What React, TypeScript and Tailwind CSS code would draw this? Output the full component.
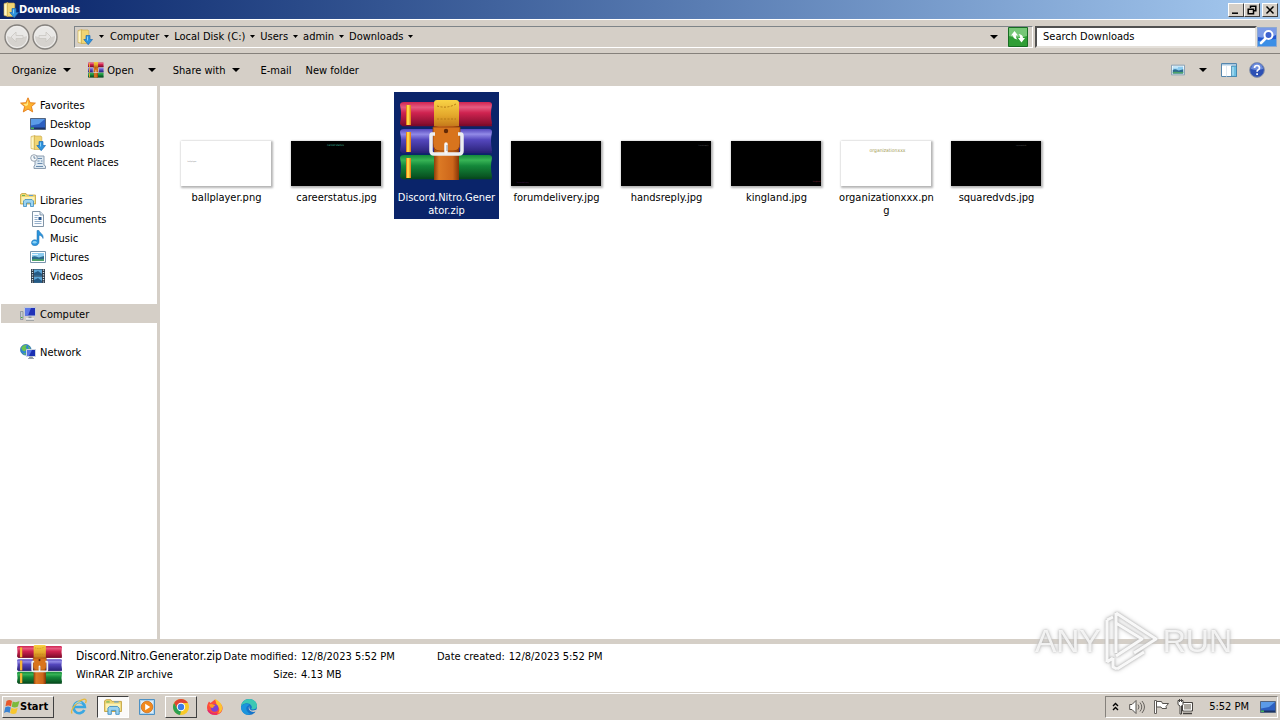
import React, { useId } from "react";

type IconProps = { className?: string };

const raised =
  "border border-t-white border-l-white border-r-[#404040] border-b-[#404040] bg-[#d5cfc7]";

function FolderDown({ className = "size-4" }: IconProps) {
  return (
    <svg viewBox="0 0 16 16" className={className} aria-hidden="true">
      <path d="M1 1.500 5 .5v14L1 13.500z" fill="#f8e9a0" stroke="#c9a545" strokeWidth=".6" />
      <path d="M4.500 1H11l.8 1v12.500H4.500z" fill="#f1d573" stroke="#c8a648" strokeWidth=".6" />
      <path d="M2.200 2.500v10.600" stroke="#fffbe0" />
      <path d="M9 6.500h4v4h2.500L11.200 15.700 6.800 10.500H9z" fill="#2f93dd" stroke="#1c6cb4" strokeWidth=".7" />
      <path d="M10.500 7.500v4" stroke="#8ad2f8" />
    </svg>
  );
}

function Star() {
  return (
    <svg viewBox="0 0 16 16" className="size-4" aria-hidden="true">
      <path d="m8 .8 2.100 4.900 5.300.4-4 3.500 1.300 5.300L8 12.100l-4.700 2.800 1.300-5.300-4-3.500 5.300-.4z" fill="#fdb22f" stroke="#e37a17" strokeWidth=".9" />
      <path d="M8 3 6.700 6.700l-3.500.4 2.700 2.200L8 8z" fill="#ffe680" />
    </svg>
  );
}

function Monitor() {
  return (
    <svg viewBox="0 0 16 16" className="size-4" aria-hidden="true">
      <path d="M.5 2.500h15v11H.5z" fill="#2c5fc0" stroke="#53657f" />
      <path d="M1 3h14L9 8 1 9.500z" fill="#5b9be8" />
      <path d="M1 11.500h14V13H1z" fill="#1c3264" />
      <path d="M1 11.500h3V13H1z" fill="#45b35c" />
    </svg>
  );
}

function Recent() {
  return (
    <svg viewBox="0 0 16 16" className="size-4" aria-hidden="true">
      <path d="M5 2h9v9l1.500 1v2.500H4V12l1-1z" fill="#dde8f1" stroke="#8194a8" strokeWidth=".9" />
      <path d="M7.500 4.500h4.500M7.500 7h2M11 7h1.500M7.500 9.500h5M6 12.500h7" stroke="#6b8cae" />
      <circle cx="4" cy="4" r="3.300" fill="#f7fafc" stroke="#8d9aa8" strokeWidth=".9" />
      <path d="M4 2v2.200h1.600" fill="none" stroke="#4f6c8a" strokeWidth=".8" />
    </svg>
  );
}

function Library({ className = "size-4" }: IconProps) {
  return (
    <svg viewBox="0 0 16 16" className={className} aria-hidden="true">
      <path d="M.5 2.500 2 1.500h4l1 1.500h8.500v9H.5z" fill="#efd672" stroke="#c3a23f" strokeWidth=".8" />
      <path d="M1.500 5h13v6h-13z" fill="#fbf1b4" />
      <path d="M2 3.500h3" stroke="#66b456" />
      <path d="M9 3.500h4" stroke="#5e9ed4" />
      <path d="M3.500 14.500V9L5 7.500h7L13.500 9v5.500h-3V11h-4v3.500z" fill="#9bd3f0" stroke="#3c8cc0" strokeWidth=".8" />
    </svg>
  );
}

function DocumentIcon() {
  return (
    <svg viewBox="0 0 16 16" className="size-4" aria-hidden="true">
      <path d="M2.500.5H10L13.500 4v11.500h-11z" fill="#fbfdff" stroke="#74899d" strokeWidth=".9" />
      <path d="M10 .5V4h3.500" fill="#d5e2ee" stroke="#74899d" strokeWidth=".8" />
      <path d="M4.500 4.500h4M4.500 6.500h3M4.500 8.500h3M4.500 10.500h7M4.500 12.500h7" stroke="#7b9bbd" strokeWidth=".8" />
      <path d="M8.500 6h3v3h-3z" fill="#27558c" />
    </svg>
  );
}

function MusicIcon() {
  return (
    <svg viewBox="0 0 16 16" className="size-4" aria-hidden="true">
      <path d="M7 .5h2c.5 2.500 5 3.500 4 8-.5-2-2-3-4-3.300V12c0 4.500-7.500 4.800-7.500 1C1.500 10 4.500 9 7 10.300z" fill="#2c95dc" stroke="#1c6cae" strokeWidth=".5" />
      <ellipse cx="4.600" cy="12.300" rx="2" ry="1.200" fill="#8cd2f5" />
    </svg>
  );
}

function PictureIcon({ className = "size-4" }: IconProps) {
  return (
    <svg viewBox="0 0 16 16" className={className} aria-hidden="true">
      <path d="M.5 2.500h15v11H.5z" fill="#fff" stroke="#7895ad" />
      <path d="M2 4h12v8H2z" fill="#8dccf0" />
      <path d="M2 8c3-2 5 0 7 .5L14 7v5H2z" fill="#2c6b8d" />
      <path d="M2 10.500c5-1.500 8 .5 12-.5v2H2z" fill="#4fa36a" />
      <path d="M2 5.500h6" stroke="#e7f6fe" />
    </svg>
  );
}

function VideoIcon() {
  return (
    <svg viewBox="0 0 16 16" className="size-4" aria-hidden="true">
      <path d="M1 1h14v14H1z" fill="#2c3947" />
      <path d="M4 1.500h8v6H4zM4 8.500h8v6H4z" fill="#5ba4d6" />
      <path d="m4 5 4-2 4 3v1.500H4zM4 12l4-2 4 3v1.500H4z" fill="#245a86" />
      <path d="M2.500 1.500v13M13.500 1.500v13" stroke="#d8e4ee" strokeWidth="1.300" strokeDasharray="1.200 1.200" />
    </svg>
  );
}

function ComputerIcon() {
  return (
    <svg viewBox="0 0 16 16" className="size-4" aria-hidden="true">
      <path d="M.5 5.500h2.500v8H.5z" fill="#c5cbd0" stroke="#7b8590" strokeWidth=".7" />
      <path d="M1 11.500h1.500" stroke="#45ad45" />
      <path d="M4.500 1.500h11v8.500h-11z" fill="#2032b8" stroke="#c3ccdc" />
      <path d="M5 2h6L8 9.500H5z" fill="#5c78e8" />
      <path d="M8.500 10.500h3v2h-3z" fill="#8a949e" />
      <path d="M6 13h8" stroke="#eef1f4" strokeWidth="1.600" />
      <path d="M6 14.300h8" stroke="#7a858e" strokeWidth=".7" />
    </svg>
  );
}

function NetworkIcon() {
  return (
    <svg viewBox="0 0 16 16" className="size-4" aria-hidden="true">
      <circle cx="5.800" cy="5.800" r="5.300" fill="#2f86d1" stroke="#2467a4" strokeWidth=".7" />
      <path d="M1.200 4C3 1 5 .8 7 1L5.500 3.500 7 5 4.500 7.500l-2-1zM3 9l3 .5-1 1.500zM8 2l2.500 2L9 5.500z" fill="#6cc34e" />
      <path d="M6.500 5.500h9v7h-9z" fill="#1a2fb3" stroke="#cdd6e2" />
      <path d="M7 6h5l-3 6H7z" fill="#5672e4" />
      <path d="M9.500 13h3v1h-3zM8 14.500h6" fill="#8e98a5" stroke="#8e98a5" strokeWidth=".9" />
    </svg>
  );
}

function WinRar({ className }: IconProps) {
  const id = useId().replace(/:/g, "");
  const books = [
    { y: 1, name: "r", hi: "#e65a80", mid: "#cf2350", lo: "#7c0b2a" },
    { y: 28, name: "b", hi: "#9189e6", mid: "#5447bd", lo: "#292177" },
    { y: 54, name: "g", hi: "#37b355", mid: "#14883a", lo: "#07491d" },
  ];
  return (
    <svg viewBox="0 0 94 82" preserveAspectRatio="none" className={className} aria-hidden="true">
      <defs>
        {books.map((b) => (
          <linearGradient key={b.name} id={id + b.name} x1="0" y1="0" x2="0" y2="1">
            <stop offset="0" stopColor={b.mid} />
            <stop offset=".22" stopColor={b.hi} />
            <stop offset=".45" stopColor={b.mid} />
            <stop offset="1" stopColor={b.lo} />
          </linearGradient>
        ))}
        <linearGradient id={id + "s"} x1="0" y1="0" x2="1" y2="0">
          <stop offset="0" stopColor="#8e3f0b" />
          <stop offset=".2" stopColor="#dc7a25" />
          <stop offset=".75" stopColor="#cd661a" />
          <stop offset="1" stopColor="#843507" />
        </linearGradient>
        <linearGradient id={id + "t"} x1="0" y1="0" x2="0" y2="1">
          <stop offset="0" stopColor="#f9d346" />
          <stop offset=".6" stopColor="#e3a72b" />
          <stop offset="1" stopColor="#c67a1b" />
        </linearGradient>
      </defs>
      {books.map((b) => (
        <g key={b.name}>
          <path d={`M4 ${b.y + 1}h85q3 0 3 3-2 9 0 18 0 3-3 3H4q-4 0-4-3 2-9 0-18 0-3 4-3z`} fill={`url(#${id + b.name})`} />
          <path d={`M2 ${b.y + 24.500}h90`} stroke={b.lo} strokeWidth="1.500" />
          <path d={`M6 ${b.y + 4}h5v20H6z`} fill="#e8851f" />
          <path d={`M7 ${b.y + 4}h2.500v20H7z`} fill="#ffd644" />
          <path d={`M60 ${b.y + 6}h30`} stroke={b.hi} strokeWidth="1" opacity=".6" />
        </g>
      ))}
      <path d="M34 24h25v56H34z" fill={`url(#${id}s)`} />
      <path d="M34 3q0-3 3-3h19q3 0 3 3v23H34z" fill={`url(#${id}t)`} />
      <path d="M37 6q10 3 19-2M37 19h19" fill="none" stroke="#b57a14" strokeWidth="1" strokeDasharray="2 1.500" />
      <path d="M33 27h27v16q0 8-7 8H40q-7 0-7-8z" fill="#d8741d" stroke="#8d400b" strokeWidth=".8" />
      <circle cx="46" cy="31" r="2.200" fill="#632907" />
      <path d="M35 34h-3q-1 0-1 2v15q0 3 3 3h25q3 0 3-3V36q0-2-1-2h-3" fill="none" stroke="#eceef0" strokeWidth="3.500" />
      <path d="M46 44v8" stroke="#f7f7f8" strokeWidth="3.500" strokeLinecap="round" />
      <path d="M47 45v6" stroke="#8c939d" strokeWidth="1" />
    </svg>
  );
}

function Caret({ small = false }: { small?: boolean }) {
  return (
    <svg viewBox="0 0 8 4" preserveAspectRatio="none" className={small ? "h-[3px] w-[5px]" : "h-1 w-2"} aria-hidden="true">
      <path d="M0 0h8L4 4z" fill="#000" />
    </svg>
  );
}

function NavCircle({ back }: { back: boolean }) {
  return (
    <button aria-label={back ? "Back" : "Forward"} className="size-[26px]">
      <svg viewBox="0 0 26 26" className="size-[26px]" aria-hidden="true">
        <circle cx="13" cy="13" r="12" fill="#d5d2ce" stroke="#85827e" strokeWidth="1.300" />
        <path d="M3 12a10 10 0 0 1 20 0q-10 4-20 0z" fill="#e9e8e6" />
        <circle cx="13" cy="13" r="10.500" fill="none" stroke="#f1f0ef" />
        <path
          d={back ? "M7 13l5-5v3.500h7v3h-7V18z" : "M19 13l-5-5v3.500H7v3h7V18z"}
          fill="#e6e4e2"
          stroke="#c9c6c2"
          strokeWidth=".8"
        />
      </svg>
    </button>
  );
}

function RefreshIcon() {
  return (
    <svg viewBox="0 0 20 20" className="size-5" aria-hidden="true">
      <path d="M.5.5h19v19H.5z" fill="#2f9e35" stroke="#176c22" />
      <path d="M1 1h18v8q-9 3-18 0z" fill="#76c777" />
      <path d="M3 8.500 6.500 4 10 8.500H7.800q0 2.500 1.700 4-4.500-.5-4.500-4z" fill="#fff" />
      <path d="M17 11l-3.500 4.500L10 11h2.200q0-2.500-1.700-4 4.500.5 4.500 4z" fill="#fff" />
    </svg>
  );
}

function SearchIcon() {
  return (
    <svg viewBox="0 0 20 20" className="size-5" aria-hidden="true">
      <path d="M.5.5h19v19H.5z" fill="#2457cf" stroke="#8da9d2" />
      <path d="M1 1h18v7q-9 4-18 2z" fill="#7b9ae6" />
      <path d="M1 14q9-1 18-2v7H1z" fill="#3c8fe6" />
      <path d="m8.500 11.500-4.500 4.500" stroke="#fff" strokeWidth="2.600" strokeLinecap="round" />
      <circle cx="11.500" cy="8" r="4" fill="#3d62cf" stroke="#fff" strokeWidth="2" />
    </svg>
  );
}

function HelpIcon() {
  return (
    <svg viewBox="0 0 16 16" className="size-4" aria-hidden="true">
      <circle cx="8" cy="8" r="7.400" fill="#2c50b4" stroke="#8a95ab" />
      <path d="M2 7a6 6 0 0 1 12 0q-6 2-12 0z" fill="#6d8cdc" />
      <path d="M5.500 6q0-2.500 2.500-2.500T10.500 6q0 1.300-1.500 2-.9.500-.9 1.700M8.100 11.300v1.600" fill="none" stroke="#fff" strokeWidth="1.700" />
    </svg>
  );
}

function PaneIcon() {
  return (
    <svg viewBox="0 0 16 14" className="h-3.5 w-4" aria-hidden="true">
      <path d="M.5.5h15v13H.5z" fill="#fff" stroke="#5586ad" />
      <path d="M1 1h14v1.500H1z" fill="#a8c9e2" />
      <path d="M5.500 2.500v11" stroke="#dfe9f1" />
      <path d="M10.500 3v10.500h5V3z" fill="#6cbfe2" stroke="#3b80a8" strokeWidth=".7" />
      <path d="M12 4v8.500" stroke="#c4ebfa" />
    </svg>
  );
}

function NavRow({ icon, label, child = false, active = false }: {
  icon: React.ReactNode; label: string; child?: boolean; active?: boolean;
}) {
  return (
    <a
      href={"#" + label.replace(" ", "-")}
      className={
        "ml-px flex h-[19px] items-center gap-1 " +
        (child ? "pl-[29px] " : "pl-[19px] ") +
        (active ? "bg-[#d5cfc7]" : "")
      }
    >
      {icon}
      <span className="pt-0.5">{label}</span>
    </a>
  );
}

function Thumb({ dark, mark, text }: { dark: boolean; mark: string; text: string }) {
  return (
    <div
      className={
        "mr-0.5 flex h-[45px] w-[90px] overflow-hidden leading-[5px] shadow-[1px_1px_2px_1px_#b5b5b5] " +
        (dark ? "bg-black " : "bg-white ") + mark
      }
    >
      {text}
    </div>
  );
}

const files = [
  { name: "ballplayer.png", dark: false, text: "ballplayer", mark: "items-center pl-[7px] pb-1 text-[2px] text-[#8a8a8a]" },
  { name: "careerstatus.jpg", dark: true, text: "careerstatus", mark: "justify-center items-start pt-0.5 text-[3px] text-[#35a088]" },
  { name: "Discord.Nitro.Generator.zip", archive: true },
  { name: "forumdelivery.jpg", dark: true, text: "forumdelivery", mark: "items-end pl-1.5 pb-px text-[2px] text-[#421a4c]" },
  { name: "handsreply.jpg", dark: true, text: "handsreply", mark: "justify-end items-start pr-0.5 pt-0.5 text-[2px] text-[#555]" },
  { name: "kingland.jpg", dark: true, text: "kingland", mark: "justify-end items-end pb-0.5 text-[2px] text-[#852b3c]" },
  { name: "organizationxxx.png", dark: false, text: "organizationxxx", mark: "justify-center items-start pl-1 pt-[7px] text-[5px] text-[#a39b56]" },
  { name: "squaredvds.jpg", dark: true, text: "squaredvds", mark: "justify-end items-start pr-3.5 pt-0.5 text-[2px] text-[#555]" },
];

function Crumb({ label }: { label: string }) {
  return (
    <span className="flex items-center gap-[5px]">
      <a href={"#" + label.replace(/\W/g, "")}>{label}</a>
      <Caret small />
    </span>
  );
}

function WindowButton({ label, path }: { label: string; path: string }) {
  return (
    <button aria-label={label} className={"flex h-3.5 w-4 items-center justify-center " + raised}>
      <svg viewBox="0 0 10 10" className="size-2.5" aria-hidden="true">
        <path d={path} fill="none" stroke="#000" strokeWidth="1.500" />
      </svg>
    </button>
  );
}

function StartFlag() {
  return (
    <svg viewBox="0 0 16 16" className="size-4" aria-hidden="true">
      <path d="M2.500 2q3-2 5.500 0L7 7.500q-2.500-2-5.500-.2z" fill="#e8582a" />
      <path d="M8.700 2.400q3 1.700 6.800-.4l-1.600 5.500q-3 1.800-6.200.2z" fill="#7cba3c" />
      <path d="M1.300 8.300q3-1.600 5.500.2l-1.200 5.500q-2.500-1.800-5.600-.1z" fill="#3a83d2" />
      <path d="M7.500 8.800q3 1.700 6.200 0l-1.500 5.500q-3 1.600-6.100-.2z" fill="#f8c62c" />
    </svg>
  );
}

function IeIcon() {
  return (
    <svg viewBox="0 0 18 18" className="size-[18px]" aria-hidden="true">
      <path d="M14.300 12A5.600 5.600 0 1 1 14.800 9H4.500" fill="none" stroke="#39a7e2" strokeWidth="2.700" />
      <path d="M2.200 15.500C-.5 13 6 4 12 1.800c4-1.500 5 .2 3.500 3.200" fill="none" stroke="#e6b93a" strokeWidth="1.300" />
      <path d="M4.800 6.500q3-4 7-1.500" fill="none" stroke="#a0dcf7" strokeWidth=".9" />
    </svg>
  );
}

function MediaIcon() {
  return (
    <svg viewBox="0 0 18 18" className="size-[18px]" aria-hidden="true">
      <path d="M1.500 1.500h15v15h-15z" fill="#aed4ef" stroke="#4d91c4" />
      <path d="M3 3h12v12H3z" fill="#dcedf8" />
      <circle cx="9" cy="9" r="5.800" fill="#f18a1e" stroke="#c96410" strokeWidth=".7" />
      <path d="m7.200 5.800 5 3.200-5 3.200z" fill="#fff" />
    </svg>
  );
}

function ChromeIcon() {
  return (
    <svg viewBox="0 0 18 18" className="size-[18px]" aria-hidden="true">
      <circle cx="9" cy="9" r="8" fill="#f8c927" />
      <path d="M2.100 5A8 8 0 0 1 15.900 5H9L5.500 11z" fill="#df4434" />
      <path d="M2.100 5 5.500 11 9 13l-1 4A8 8 0 0 1 2.100 5z" fill="#2ba052" />
      <circle cx="9" cy="9" r="4.200" fill="#fff" />
      <circle cx="9" cy="9" r="3.200" fill="#3a7de8" />
    </svg>
  );
}

function FirefoxIcon() {
  return (
    <svg viewBox="0 0 18 18" className="size-[18px]" aria-hidden="true">
      <path d="M9 1.500c1 1 2 1.300 2.500 3.500C15 5 17 8 16.500 11 16 14.500 13 17 9 17c-4.500 0-8-3.300-8-7.500C1 7 2 5 3 3.500L4.500 5z" fill="#fd4b3c" />
      <path d="M9 1c3 1.500 7 4 7.300 8.500.2 3-2 5.500-4.800 6.200 3-2.700 2-6.200-.5-7.700z" fill="#ffc32f" />
      <circle cx="8.700" cy="10" r="3.700" fill="#7d42d5" />
      <path d="M3 6.500Q6 5 9.500 7.500 7 8 7 10q-3 0-4-3.500z" fill="#ff9a24" />
      <path d="M2 12q3 5 9 3.700" fill="none" stroke="#e32b70" strokeWidth="1.500" />
    </svg>
  );
}

function EdgeIcon() {
  return (
    <svg viewBox="0 0 18 18" className="size-[18px]" aria-hidden="true">
      <circle cx="9" cy="9" r="8" fill="#1674c9" />
      <path d="M1 8.500C1.800 3.700 5 1 9.200 1c4.800 0 8 3.500 7.800 7 0 2.700-3.300 4.200-6 3q1.600-1.500.2-3.500C9 4.300 3.500 4.700 1 8.500z" fill="#3cc8b4" />
      <path d="M1 9C3.500 4.500 8.500 5.500 9.500 7c-4 .5-5 6 1 9-5 2.500-9.500-2-9.500-7z" fill="#1c95dc" />
      <path d="M9.500 8q-1 3 1.500 4.200 3 .8 6.200-1l-.8 2.300C9 15.500 7.500 10 9.500 8z" fill="#d5cfc7" />
    </svg>
  );
}

function TaskButton({ label, icon, state = "" }: { label: string; icon: React.ReactNode; state?: string }) {
  return (
    <button
      aria-label={label}
      className={
        "flex h-[22px] w-8 items-center justify-center " +
        (state === "active"
          ? "border border-t-[#404040] border-l-[#404040] border-r-white border-b-white bg-[#fbfaf9]"
          : state === "open"
            ? raised
            : "")
      }
    >
      {icon}
    </button>
  );
}

function Watermark() {
  return (
    <div className="pointer-events-none absolute right-[48px] bottom-[47px] flex items-center gap-0.5 font-['Liberation_Sans',sans-serif] text-[32px] leading-[64px] text-white/80 [filter:drop-shadow(0_0_1px_#aaa)_drop-shadow(0_0_2px_#ccc)]">
      <span>ANY</span>
      <svg viewBox="0 0 58 64" className="h-16 w-[58px]" aria-hidden="true">
        <path
          d="M13 4v40M13 4l40 26-22 14M13 14l26 16-26 17M4 11v42M4 11l6-3M4 53l6-4M14 60l27-17M10 49v9l4 2"
          fill="none"
          stroke="#fff"
          strokeOpacity=".9"
          strokeWidth="3"
          strokeLinejoin="round"
        />
      </svg>
      <span>RUN</span>
    </div>
  );
}

export default function App() {
  return (
    <div className="relative flex h-screen flex-col overflow-hidden bg-white font-['DejaVu_Sans_Condensed','DejaVu_Sans',sans-serif] text-[11px] leading-[13px] whitespace-nowrap text-black">
      <header className="flex h-[19px] shrink-0 items-center justify-between bg-linear-to-r from-[#0a246a] to-[#a6caf0] pr-0.5 pl-[3px]">
        <h1 className="flex items-center font-bold text-white">
          <FolderDown />
          Downloads
        </h1>
        <div className="flex">
          <WindowButton label="Minimize" path="M1 8.200h6" />
          <WindowButton label="Restore" path="M3.500 3V1.200h5.300v4.500H7M1.200 4.200h5.300v4.500H1.200z" />
          <span className="w-0.5" />
          <WindowButton label="Close" path="m1.500 1.500 7 7m0-7-7 7" />
        </div>
      </header>

      <div className="flex h-[35px] shrink-0 items-center border-t border-b border-t-white border-b-[#85817b] bg-[#d5cfc7] pr-[3px] pl-1 shadow-[0_1px_0_#fff]">
        <div className="flex gap-0.5">
          <NavCircle back />
          <NavCircle back={false} />
        </div>
        <nav aria-label="Address" className="ml-4 flex h-[22px] min-w-0 flex-1 items-center border border-t-[#7e8488] border-l-[#7e8488] border-r-white border-b-white">
          <FolderDown className="mr-1.5 ml-0.5 size-4" />
          <Caret small />
          <div className="ml-1.5 flex flex-1 gap-[5px]">
            {["Computer", "Local Disk (C:)", "Users", "admin", "Downloads"].map((c) => (
              <Crumb key={c} label={c} />
            ))}
          </div>
          <button aria-label="Previous locations" className="mr-2.5"><Caret /></button>
          <button aria-label="Refresh"><RefreshIcon /></button>
          <span className="w-1" />
        </nav>
        <input
          aria-label="Search Downloads"
          placeholder="Search Downloads"
          className="ml-0.5 h-[22px] w-[222px] rounded-none border-2 border-t-[#505050] border-l-[#505050] border-r-[#e4e0da] border-b-[#e4e0da] bg-white px-1.5 outline-none placeholder:text-black"
        />
        <button aria-label="Search"><SearchIcon /></button>
      </div>

      <div className="flex h-8 shrink-0 items-center bg-[#d5cfc7] pr-[15px] pl-3">
        <button className="flex items-center gap-[7px]">Organize <Caret /></button>
        <button className="ml-[17px] flex items-center gap-[3px]"><WinRar className="size-4" /> Open</button>
        <button aria-label="Open options" className="ml-3.5"><Caret /></button>
        <button className="ml-[17px] flex items-center gap-[7px]">Share with <Caret /></button>
        <button className="ml-5">E-mail</button>
        <button className="ml-3.5">New folder</button>
        <div className="ml-auto flex items-center">
          <button aria-label="Change view"><PictureIcon className="size-3.5" /></button>
          <button aria-label="View options" className="ml-3.5"><Caret /></button>
          <button aria-label="Preview pane" className="ml-3.5"><PaneIcon /></button>
          <button aria-label="Help" className="ml-3"><HelpIcon /></button>
        </div>
      </div>

      <div className="flex min-h-0 flex-1">
        <nav aria-label="Folders" className="w-40 shrink-0 overflow-hidden border-r-[3px] border-[#d5cfc7] pt-[9px]">
          <NavRow icon={<Star />} label="Favorites" />
          <NavRow child icon={<Monitor />} label="Desktop" />
          <NavRow child icon={<FolderDown />} label="Downloads" />
          <NavRow child icon={<Recent />} label="Recent Places" />
          <div className="h-[19px]" />
          <NavRow icon={<Library />} label="Libraries" />
          <NavRow child icon={<DocumentIcon />} label="Documents" />
          <NavRow child icon={<MusicIcon />} label="Music" />
          <NavRow child icon={<PictureIcon />} label="Pictures" />
          <NavRow child icon={<VideoIcon />} label="Videos" />
          <div className="h-[19px]" />
          <NavRow active icon={<ComputerIcon />} label="Computer" />
          <div className="h-[19px]" />
          <NavRow icon={<NetworkIcon />} label="Network" />
        </nav>
        <main className="flex flex-1 flex-wrap content-start gap-[5px] overflow-hidden pt-1.5 pl-3.5">
          {files.map((f) => (
            <figure
              key={f.name}
              className={
                "flex h-[127px] w-[105px] flex-col items-center " +
                (f.archive ? "bg-[#0a246a] text-white" : "")
              }
            >
              <div className="flex h-[99px] flex-col items-center justify-end pb-[5px]">
                {f.archive ? (
                  <WinRar className="mb-1 h-[82px] w-[94px]" />
                ) : (
                  <Thumb dark={!!f.dark} mark={f.mark ?? ""} text={f.text ?? ""} />
                )}
              </div>
              <figcaption className="w-[99px] text-center break-all whitespace-normal">{f.name}</figcaption>
            </figure>
          ))}
        </main>
      </div>

      <section aria-label="Details" className="flex h-[53px] shrink-0 items-start border-t-[5px] border-[#d5cfc7] pt-px pl-[17px]">
        <WinRar className="h-10 w-[46px]" />
        <div className="ml-[13px] flex w-[147px] flex-col gap-[5px] pt-[5px]">
          <span className="text-[12px]">Discord.Nitro.Generator.zip</span>
          <span>WinRAR ZIP archive</span>
        </div>
        <dl className="grid w-[210px] grid-cols-[74px_1fr] gap-x-1 gap-y-[5px] pt-[5px]">
          <dt className="text-right">Date modified:</dt>
          <dd>12/8/2023 5:52 PM</dd>
          <dt className="text-right">Size:</dt>
          <dd>4.13 MB</dd>
        </dl>
        <dl className="ml-1 flex gap-1 pt-[5px]">
          <dt>Date created:</dt>
          <dd>12/8/2023 5:52 PM</dd>
        </dl>
      </section>

      <footer className="flex h-7 shrink-0 items-center border-t border-[#d5cfc7] bg-[#d5cfc7] pr-0.5 pl-0.5 shadow-[inset_0_1px_0_#fff]">
        <button className={"flex h-[22px] w-[52px] items-center pl-px font-bold " + raised}>
          <StartFlag />
          Start
        </button>
        <div className="ml-[9px] flex gap-0.5">
          <TaskButton label="Internet Explorer" icon={<IeIcon />} />
          <TaskButton label="Windows Explorer" icon={<Library className="size-[18px]" />} state="active" />
          <TaskButton label="Media Player" icon={<MediaIcon />} />
          <TaskButton label="Chrome" icon={<ChromeIcon />} state="open" />
          <TaskButton label="Firefox" icon={<FirefoxIcon />} />
          <TaskButton label="Edge" icon={<EdgeIcon />} />
        </div>
        <div className="ml-auto flex h-[22px] items-center border border-t-[#85817b] border-l-[#85817b] border-r-white border-b-white pr-px pl-1.5">
          <button aria-label="Show hidden icons">
            <svg viewBox="0 0 7 9" className="h-[9px] w-[7px]" aria-hidden="true">
              <path d="m1 4 2.500-2.500L6 4M1 8l2.500-2.500L6 8" fill="none" stroke="#000" strokeWidth="1.400" />
            </svg>
          </button>
          <svg viewBox="0 0 16 16" className="ml-2.5 size-4" role="img" aria-label="Volume">
            <path d="M.7 5.500H3L7 1.500v13L3 10.500H.7z" fill="#fff" stroke="#55524e" />
            <path d="M9 5.500q2 2.500 0 5M11 3.500q3.500 4.500 0 9M13 2q5 6 0 12" fill="none" stroke="#66625e" />
          </svg>
          <svg viewBox="0 0 16 16" className="ml-2 size-4" role="img" aria-label="Action Center">
            <path d="M1.500 1.500h2v13h-2z" fill="#fff" stroke="#66625e" />
            <path d="M3.500 2.500h5l1 2h6l-2.500 3 .5 2H9l-1-1.500H3.500z" fill="#fff" stroke="#55524e" />
          </svg>
          <svg viewBox="0 0 16 16" className="ml-2 size-4" role="img" aria-label="Network status">
            <path d="M5.500 3.500h10v8.500h-10z" fill="#aaa69f" stroke="#45423f" />
            <path d="M6.500 4.500h8v6.500h-8z" fill="none" stroke="#fff" />
            <path d="M6 14.500h9" stroke="#45423f" strokeWidth="1.500" />
            <path d="M1 1.500h5v4L4.500 7v8H3V7L1 5.500z" fill="#fff" stroke="#45423f" />
            <path d="M2.500 0v3M4.500 0v3" stroke="#45423f" />
          </svg>
          <time className="ml-4">5:52 PM</time>
          <button aria-label="Show desktop" className="ml-[11px]"><Monitor /></button>
        </div>
      </footer>
      <Watermark />
    </div>
  );
}
